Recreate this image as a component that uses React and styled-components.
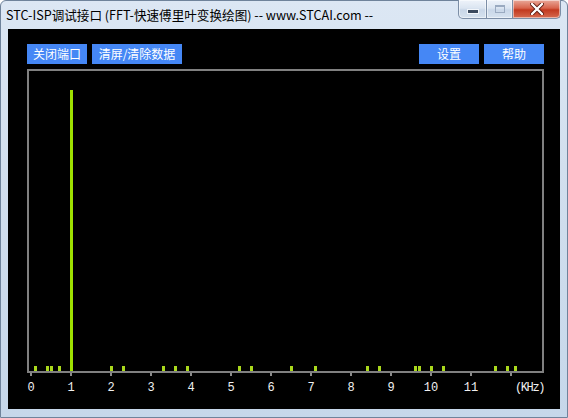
import React from "react";
import styled, { createGlobalStyle } from "styled-components";

const GlobalStyle = createGlobalStyle`
  html, body {
    margin: 0;
    padding: 0;
    overflow: hidden;
    background: #ffffff;
  }
  * {
    box-sizing: border-box;
  }
`;

const SMALL_BARS = [5, 17, 21, 29, 81, 93, 133, 145, 157, 209, 221, 261, 285, 337, 349, 385, 389, 401, 413, 465, 477, 485];
const BIG_BAR = { x: 41, top: 19 };
const TICKS = Array.from({ length: 13 }, (_, i) => i);

const Window = styled.div`
  width: 568px;
  height: 418px;
  display: flex;
  flex-direction: column;
  border: 1px solid #6f839b;
  border-radius: 6px 6px 0 0;
  background: linear-gradient(to bottom, #dce7f4 0%, #d2dfee 40%, #c6d7ea 100%);
`;

const TitleBar = styled.div`
  height: 28px;
  display: flex;
  align-items: flex-start;
  padding-left: 5px;
`;

const Title = styled.div`
  font-family: "Noto Sans CJK SC", "Noto Sans", sans-serif;
  font-size: 12.6px;
  line-height: 28px;
  color: #000000;
  white-space: nowrap;
`;

const Controls = styled.div`
  margin-left: auto;
  margin-right: 6px;
  margin-top: -1px;
  display: flex;
`;

const CtrlButton = styled.div`
  width: ${(p) => p.w}px;
  height: 19px;
  display: flex;
  align-items: center;
  justify-content: center;
  border: 1px solid #7c8ea6;
  border-top: none;
  border-left: ${(p) => (p.first ? "1px solid #7c8ea6" : "none")};
  border-radius: ${(p) => (p.first ? "0 0 0 5px" : p.last ? "0 0 5px 0" : "0")};
  background: ${(p) =>
    p.danger
      ? "linear-gradient(to bottom, #e9a99a 0%, #d8644c 45%, #c2391f 55%, #d66a4f 100%)"
      : "linear-gradient(to bottom, #eef3fa 0%, #dbe5f1 45%, #c9d7e8 55%, #d6e2ef 100%)"};
  box-shadow: inset 0 0 0 1px rgba(255, 255, 255, 0.5);
`;

const MinGlyph = styled.div`
  width: 10px;
  height: 3px;
  margin-top: 4px;
  background: #3b4a5e;
  border: 1px solid #f2f6fb;
  box-sizing: content-box;
`;

const MaxGlyph = styled.div`
  width: 10px;
  height: 8px;
  border: 1px solid #9aaac0;
  border-top-width: 2px;
`;

const Panel = styled.div`
  flex: 1;
  margin: 0 7px 8px 7px;
  background: #000000;
  padding: 15px 16px 0 19px;
  display: flex;
  flex-direction: column;
`;

const Toolbar = styled.div`
  display: flex;
  gap: 5px;
  height: 20px;
`;

const Spacer = styled.div`
  flex: 1;
`;

const ToolButton = styled.div`
  width: ${(p) => p.w || 60}px;
  height: 20px;
  background: #4587f5;
  color: #ffffff;
  font-family: "Noto Sans CJK SC", "Noto Sans", sans-serif;
  font-size: 12px;
  line-height: 20px;
  text-align: center;
  white-space: nowrap;
`;

const Plot = styled.div`
  margin-top: 5px;
  width: 517px;
  height: 304px;
  border: 2px solid #808080;
`;

const Axis = styled.svg`
  display: block;
  width: 517px;
  height: 36px;
`;

const TickLabel = styled.text`
  font-family: "Liberation Mono", "DejaVu Sans Mono", monospace;
  font-size: 12px;
  fill: #f0f0f0;
`;

export default function App() {
  return (
    <>
      <GlobalStyle />
      <Window>
        <TitleBar>
          <Title>STC-ISP调试接口 (FFT-快速傅里叶变换绘图) -- www.STCAI.com --</Title>
          <Controls>
            <CtrlButton w={29} first>
              <MinGlyph />
            </CtrlButton>
            <CtrlButton w={26}>
              <MaxGlyph />
            </CtrlButton>
            <CtrlButton w={48} last danger>
              <svg width="14" height="12" viewBox="0 0 14 12">
                <path d="M2 1 L12 11 M12 1 L2 11" stroke="#5a1a10" strokeWidth="4" strokeLinecap="round" />
                <path d="M2 1 L12 11 M12 1 L2 11" stroke="#ffffff" strokeWidth="2.4" strokeLinecap="round" />
              </svg>
            </CtrlButton>
          </Controls>
        </TitleBar>
        <Panel>
          <Toolbar>
            <ToolButton w={60}>关闭端口</ToolButton>
            <ToolButton w={90}>清屏/清除数据</ToolButton>
            <Spacer />
            <ToolButton w={60}>设置</ToolButton>
            <ToolButton w={60}>帮助</ToolButton>
          </Toolbar>
          <Plot>
            <svg width="513" height="300" viewBox="0 0 513 300">
              <rect x={BIG_BAR.x} y={BIG_BAR.top} width="3" height={300 - BIG_BAR.top} fill="#9ee000" />
              {SMALL_BARS.map((x) => (
                <rect key={x} x={x} y={295} width="3" height="5" fill="#a9d81c" />
              ))}
            </svg>
          </Plot>
          <Axis viewBox="0 0 517 36">
            {TICKS.map((k) => (
              <rect key={k} x={3 + 40 * k} y={0} width="2" height="3" fill="#8a8a8a" />
            ))}
            {TICKS.slice(0, 12).map((k) => (
              <TickLabel key={k} x={4 + 40 * k} y={18} textAnchor="middle">
                {k}
              </TickLabel>
            ))}
            <TickLabel x={488} y={18} letterSpacing="-1.4">
              (KHz)
            </TickLabel>
          </Axis>
        </Panel>
      </Window>
    </>
  );
}
